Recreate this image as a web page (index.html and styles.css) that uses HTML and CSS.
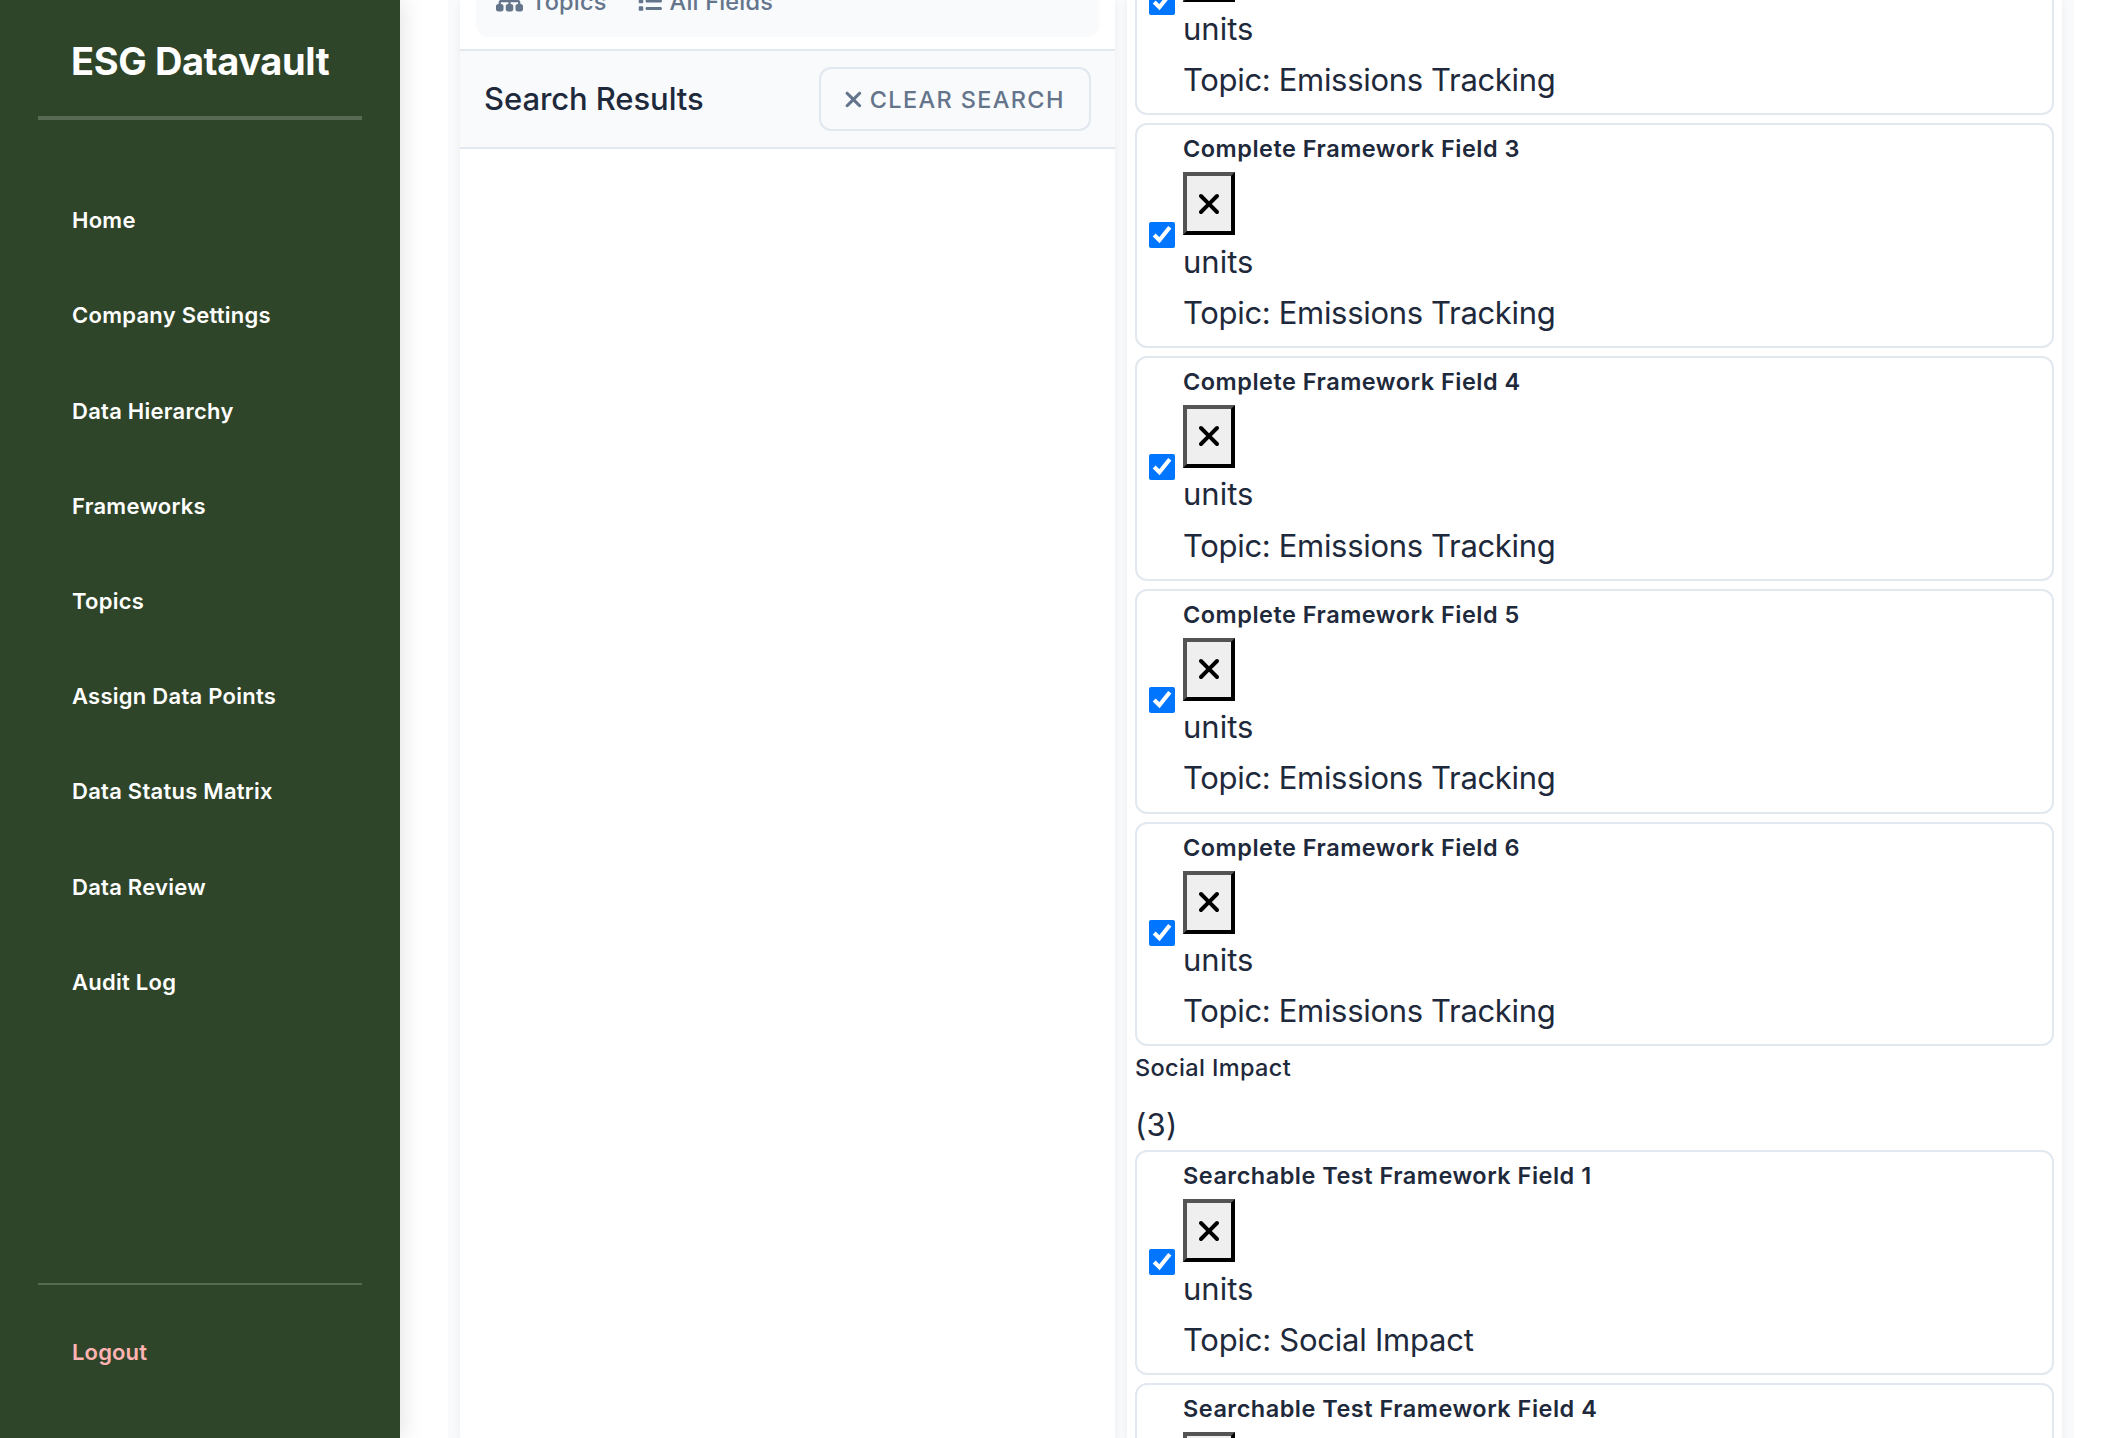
FILE: index.html
```html
<!DOCTYPE html>
<html lang="en">
<head>
<meta charset="utf-8">
<title>ESG Datavault</title>
<link rel="stylesheet" href="styles.css">
</head>
<body>
<svg class="sprite" aria-hidden="true">
  <symbol id="xmark" viewBox="0 0 384 512"><path d="M342.6 150.6c12.5-12.5 12.5-32.8 0-45.3s-32.8-12.5-45.3 0L192 210.7 86.6 105.4c-12.5-12.5-32.8-12.5-45.3 0s-12.5 32.8 0 45.3L146.7 256 41.4 361.4c-12.5 12.5-12.5 32.8 0 45.3s32.8 12.5 45.3 0L192 301.3 297.4 406.6c12.5 12.5 32.8 12.5 45.3 0s12.5-32.8 0-45.3L237.3 256 342.6 150.6z"/></symbol>
  <symbol id="sitemap" viewBox="0 0 576 512"><path d="M208 80c0-26.5 21.5-48 48-48l64 0c26.5 0 48 21.5 48 48l0 64c0 26.5-21.5 48-48 48l-8 0 0 40 152 0c30.9 0 56 25.1 56 56l0 32 8 0c26.5 0 48 21.5 48 48l0 64c0 26.5-21.5 48-48 48l-64 0c-26.5 0-48-21.5-48-48l0-64c0-26.5 21.5-48 48-48l8 0 0-32c0-4.4-3.6-8-8-8l-152 0 0 40 8 0c26.5 0 48 21.5 48 48l0 64c0 26.5-21.5 48-48 48l-64 0c-26.5 0-48-21.5-48-48l0-64c0-26.5 21.5-48 48-48l8 0 0-40-152 0c-4.4 0-8 3.6-8 8l0 32 8 0c26.5 0 48 21.5 48 48l0 64c0 26.5-21.5 48-48 48l-64 0c-26.5 0-48-21.5-48-48l0-64c0-26.5 21.5-48 48-48l8 0 0-32c0-30.9 25.1-56 56-56l152 0 0-40-8 0c-26.5 0-48-21.5-48-48l0-64z"/></symbol>
  <symbol id="list" viewBox="0 0 512 512"><path d="M40 48C26.7 48 16 58.7 16 72l0 48c0 13.3 10.7 24 24 24l48 0c13.3 0 24-10.7 24-24l0-48c0-13.3-10.7-24-24-24L40 48zM192 64c-17.7 0-32 14.3-32 32s14.3 32 32 32l288 0c17.7 0 32-14.3 32-32s-14.3-32-32-32L192 64zm0 160c-17.7 0-32 14.3-32 32s14.3 32 32 32l288 0c17.7 0 32-14.3 32-32s-14.3-32-32-32l-288 0zm0 160c-17.7 0-32 14.3-32 32s14.3 32 32 32l288 0c17.7 0 32-14.3 32-32s-14.3-32-32-32l-288 0zM16 232l0 48c0 13.3 10.7 24 24 24l48 0c13.3 0 24-10.7 24-24l0-48c0-13.3-10.7-24-24-24l-48 0c-13.3 0-24 10.7-24 24zM40 368c-13.3 0-24 10.7-24 24l0 48c0 13.3 10.7 24 24 24l48 0c13.3 0 24-10.7 24-24l0-48c0-13.3-10.7-24-24-24l-48 0z"/></symbol>
</svg>
<div class="app">
  <aside class="sidebar">
    <h2 class="brand">ESG Datavault</h2>
    <nav class="nav">
      <a class="nav-link">Home</a>
      <a class="nav-link">Company Settings</a>
      <a class="nav-link">Data Hierarchy</a>
      <a class="nav-link">Frameworks</a>
      <a class="nav-link">Topics</a>
      <a class="nav-link">Assign Data Points</a>
      <a class="nav-link">Data Status Matrix</a>
      <a class="nav-link">Data Review</a>
      <a class="nav-link">Audit Log</a>
    </nav>
    <div class="sidebar-footer"><a class="nav-link logout">Logout</a></div>
  </aside>
  <main class="main">
    <div class="columns">
      <section class="panel left-panel">
        <div class="tabs">
          <span class="tab"><svg class="icon-sitemap"><use href="#sitemap"/></svg>Topics</span>
          <span class="tab"><svg class="icon-list"><use href="#list"/></svg>All Fields</span>
        </div>
        <header class="search-header">
          <h4 class="search-title">Search Results</h4>
          <button class="clear-btn"><svg class="icon-clear"><use href="#xmark"/></svg>CLEAR SEARCH</button>
        </header>
      </section>
      <section class="panel right-panel">
        <div class="group">
          <article class="card"><input class="check" type="checkbox" checked><div class="card-body"><div class="name">Complete Framework Field 2</div><button class="remove"><svg class="icon-x"><use href="#xmark"/></svg></button><div class="unit">units</div><div class="topic">Topic: Emissions Tracking</div></div></article>
          <article class="card"><input class="check" type="checkbox" checked><div class="card-body"><div class="name">Complete Framework Field 3</div><button class="remove"><svg class="icon-x"><use href="#xmark"/></svg></button><div class="unit">units</div><div class="topic">Topic: Emissions Tracking</div></div></article>
          <article class="card"><input class="check" type="checkbox" checked><div class="card-body"><div class="name">Complete Framework Field 4</div><button class="remove"><svg class="icon-x"><use href="#xmark"/></svg></button><div class="unit">units</div><div class="topic">Topic: Emissions Tracking</div></div></article>
          <article class="card"><input class="check" type="checkbox" checked><div class="card-body"><div class="name">Complete Framework Field 5</div><button class="remove"><svg class="icon-x"><use href="#xmark"/></svg></button><div class="unit">units</div><div class="topic">Topic: Emissions Tracking</div></div></article>
          <article class="card"><input class="check" type="checkbox" checked><div class="card-body"><div class="name">Complete Framework Field 6</div><button class="remove"><svg class="icon-x"><use href="#xmark"/></svg></button><div class="unit">units</div><div class="topic">Topic: Emissions Tracking</div></div></article>
        </div>
        <h5 class="group-title">Social Impact</h5>
        <div class="group-count">(3)</div>
        <div class="group">
          <article class="card"><input class="check" type="checkbox" checked><div class="card-body"><div class="name">Searchable Test Framework Field 1</div><button class="remove"><svg class="icon-x"><use href="#xmark"/></svg></button><div class="unit">units</div><div class="topic topic-social">Topic: Social Impact</div></div></article>
          <article class="card"><input class="check" type="checkbox" checked><div class="card-body"><div class="name">Searchable Test Framework Field 4</div><button class="remove"><svg class="icon-x"><use href="#xmark"/></svg></button><div class="unit">units</div><div class="topic topic-social">Topic: Social Impact</div></div></article>
        </div>
      </section>
    </div>
  </main>
</div>
</body>
</html>
```
FILE: styles.css
```css
* { box-sizing: border-box; }

body {
  margin: 0;
  height: 1438px;
  overflow: hidden;
  background: #fff;
  color: #1e293b;
  font-family: Inter, "Liberation Sans", sans-serif;
  font-size: 31px;
  line-height: 51.2px;
}

h2, h4, h5 { margin: 0; }
svg { display: block; flex: none; fill: currentColor; }
.sprite { display: none; }

.app { display: flex; height: 1438px; }

/* Sidebar */
.sidebar {
  display: flex;
  flex-direction: column;
  flex: none;
  width: 400px;
  padding: 0 38px;
  background: #2f4529;
  color: #fff;
  box-shadow: 4px 0 20px rgba(0, 0, 0, 0.1);
}
.brand {
  height: 120px;
  padding: 31px 0 0 33px;
  border-bottom: 4px solid rgba(255, 255, 255, 0.2);
  font-size: 38px;
  font-weight: 700;
  line-height: 60px;
  letter-spacing: -0.4px;
}
.nav { padding-top: 53.2px; }
.nav-link {
  display: block;
  padding: 30px 34px;
  font-size: 22px;
  font-weight: 600;
  line-height: 35.2px;
  letter-spacing: 0.26px;
}
.sidebar-footer {
  height: 155px;
  margin-top: auto;
  padding-top: 20px;
  border-top: 2px solid rgba(255, 255, 255, 0.2);
}
.logout { color: #ffb3b3; letter-spacing: 0.15px; }

/* Content */
.main { flex: 1; min-width: 0; padding: 0 48px; }
.columns {
  display: flex;
  gap: 12px;
  height: 1438px;
  padding: 0 12px;
  overflow: hidden;
  background: #f8fafc;
}
.panel { background: #fff; box-shadow: 0 2px 8px rgba(0, 0, 0, 0.06); }
.left-panel { flex: none; width: 655px; }
.right-panel { flex: 1; min-width: 0; padding: 0 8px; }

.tabs {
  display: flex;
  align-items: center;
  gap: 31px;
  height: 71px;
  margin: -34px 16px 12px;
  padding-left: 20px;
  border-radius: 12px;
  background: #f8fafc;
  color: #64748b;
  font-size: 23.5px;
  font-weight: 500;
  letter-spacing: 0.2px;
}
.tab { display: flex; align-items: center; gap: 8px; }
.icon-sitemap { width: 27px; height: 24px; }
.icon-list { width: 24px; height: 24px; }

.search-header {
  display: flex;
  align-items: center;
  justify-content: space-between;
  height: 100px;
  padding: 0 24px;
  border-top: 2px solid #e2e8f0;
  border-bottom: 2px solid #e2e8f0;
  background: #f8fafc;
}
.search-title { font-size: 31px; font-weight: 550; letter-spacing: -0.08px; }
.clear-btn {
  display: flex;
  align-items: center;
  gap: 7px;
  width: 272px;
  height: 64px;
  padding: 0 0 0 23px;
  border: 2px solid #e2e8f0;
  border-radius: 12px;
  background: transparent;
  color: #64748b;
  font: 500 23.5px Inter, sans-serif;
  letter-spacing: 1.35px;
  white-space: nowrap;
}
.icon-clear { width: 18.75px; height: 25px; }

/* Selected fields; the list is scrolled partway down */
.right-panel > .group:first-child { margin-top: -109.6px; }
.group { display: flex; flex-direction: column; gap: 8px; }
.card {
  display: flex;
  align-items: center;
  gap: 8px;
  height: 224.8px;
  padding: 8px 12px;
  border: 2px solid #e2e8f0;
  border-radius: 12px;
}
.check { flex: none; width: 26px; height: 26px; margin: 0 0 2px; }
.name {
  padding-bottom: 6px;
  font-size: 23.5px;
  font-weight: 600;
  line-height: 32.4px;
  letter-spacing: 0.49px;
}
.remove {
  display: flex;
  align-items: center;
  justify-content: center;
  width: 52px;
  height: 63px;
  margin: 0.5px 0;
  padding: 0;
  border: 4px outset #000;
  border-radius: 0;
  background: #efefef;
  color: #000;
}
.icon-x { width: 24px; height: 32px; }
.unit { letter-spacing: 0; }
.topic { letter-spacing: -0.32px; }
.topic-social { letter-spacing: -0.24px; }

.group-title {
  margin: 8px 0 16px;
  font-size: 23.5px;
  font-weight: 500;
  line-height: 28.8px;
  letter-spacing: 0.37px;
}
.group-count { letter-spacing: 0.3px; }
```
